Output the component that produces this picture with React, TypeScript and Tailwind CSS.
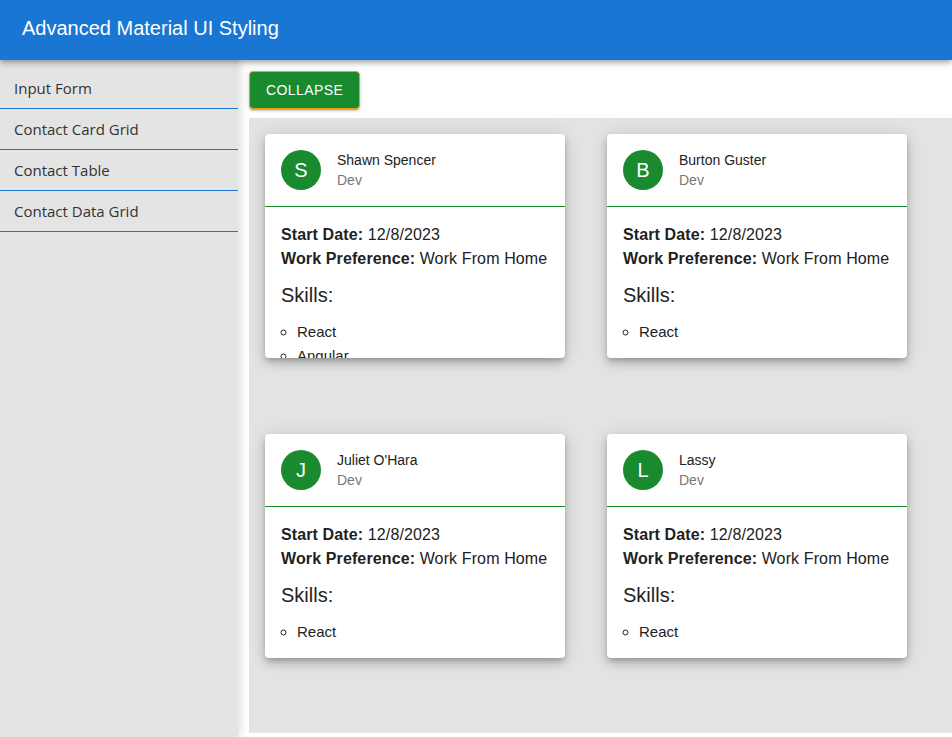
import React from "react";

const contacts = [
  { name: "Shawn Spencer", initial: "S", skills: ["React", "Angular"] },
  { name: "Burton Guster", initial: "B", skills: ["React"] },
  { name: "Juliet O'Hara", initial: "J", skills: ["React"] },
  { name: "Lassy", initial: "L", skills: ["React"] },
];

function Card({ c }: { c: (typeof contacts)[number] }) {
  return (
    <div className="w-[300px] h-[224px] overflow-hidden rounded-[4px] bg-white shadow-[0_3px_5px_-1px_rgba(0,0,0,0.2),0_6px_10px_0_rgba(0,0,0,0.14),0_1px_18px_0_rgba(0,0,0,0.12)]">
      <div className="flex items-center gap-4 p-4 border-b border-b-[#1a8a2f]">
        <div className="w-10 h-10 rounded-full bg-[#1a8a2f] text-white flex items-center justify-center text-[20px]">
          {c.initial}
        </div>
        <div className="flex flex-col">
          <span className="text-[14px] leading-[20px] text-[#222]">{c.name}</span>
          <span className="text-[14px] leading-[20px] text-[#777]">Dev</span>
        </div>
      </div>
      <div className="px-4 pt-4 text-[#222] tracking-[0.12px]">
        <div className="text-[16px] leading-[24px]">
          <b>Start Date:</b> 12/8/2023
        </div>
        <div className="text-[16px] leading-[24px]">
          <b>Work Preference:</b> Work From Home
        </div>
        <div className="mt-[9px] text-[20px] leading-[30px] tracking-normal">Skills:</div>
        <ul className="mt-[10px] list-[circle] pl-[16px] text-[15px] leading-[24px] tracking-normal">
          {c.skills.map((s) => (
            <li key={s}>{s}</li>
          ))}
        </ul>
      </div>
    </div>
  );
}

export default function App() {
  return (
    <div className="w-[952px] h-[737px] overflow-hidden flex flex-col bg-white font-['Liberation_Sans',Arial,sans-serif]">
      <header className="relative z-20 h-[60px] shrink-0 bg-[#1976d2] flex items-center px-[22px] pb-[4px] shadow-[0_2px_4px_-1px_rgba(0,0,0,0.2),0_4px_5px_0_rgba(0,0,0,0.14),0_1px_10px_0_rgba(0,0,0,0.12)]">
        <h1 className="text-white text-[20px] leading-none">Advanced Material UI Styling</h1>
      </header>
      <div className="flex flex-1 min-h-0">
        <nav className="relative z-10 w-[238px] shrink-0 pt-[8px] bg-[#e4e4e4] shadow-[3px_0_8px_rgba(0,0,0,0.12)] font-['Open_Sans','Noto_Sans',sans-serif] text-[15px] text-[#333]">
          {["Input Form", "Contact Card Grid", "Contact Table", "Contact Data Grid"].map((t) => (
            <div key={t} className="h-[41px] flex items-center px-[14px] border-b border-b-[#1976d2]">
              {t}
            </div>
          ))}
        </nav>
        <main className="flex-1 flex flex-col pl-[11px] pt-[11px] pb-[4px] min-w-0">
          <div>
            <button className="h-[38px] px-[16px] rounded-[4px] bg-[#1a8a2f] border border-[#f0a30a] text-white text-[14px] tracking-[0.4px] shadow-[0_3px_1px_-2px_rgba(0,0,0,0.2),0_2px_2px_0_rgba(0,0,0,0.14),0_1px_5px_0_rgba(0,0,0,0.12)]">
              COLLAPSE
            </button>
          </div>
          <div className="mt-[9px] flex-1 bg-[#e3e3e3] pl-4 pt-4">
            <div className="grid grid-cols-[300px_300px] gap-x-[42px] gap-y-[76px]">
              {contacts.map((c) => (
                <Card key={c.name} c={c} />
              ))}
            </div>
          </div>
        </main>
      </div>
    </div>
  );
}
